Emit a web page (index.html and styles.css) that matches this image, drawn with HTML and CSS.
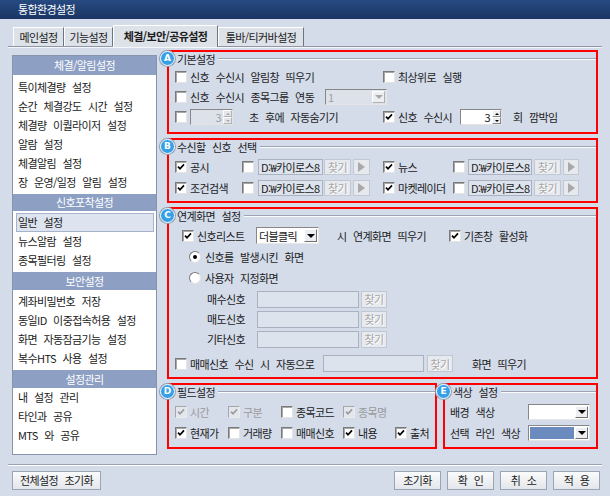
FILE: index.html
```html
<!DOCTYPE html>
<html lang="ko">
<head>
    <meta charset="UTF-8">
    <title>통합환경설정</title>
    <link rel="stylesheet" href="styles.css">
</head>
<body>
<div class="window">
    <div class="titlebar">통합환경설정</div>

    <!-- 탭 -->
    <ul class="tabs">
        <li>메인설정</li>
        <li>기능설정</li>
        <li class="on">체결/보안/공유설정</li>
        <li>툴바/티커바설정</li>
    </ul>

    <div class="panel">
        <!-- 왼쪽 메뉴 -->
        <div class="side">
            <div class="side-head first">체결/알림설정</div>
            <ul class="first">
                <li>특이체결량 설정</li>
                <li>순간 체결강도 시간 설정</li>
                <li>체결량 이퀄라이저 설정</li>
                <li>알람 설정</li>
                <li>체결알림 설정</li>
                <li>장 운영/일정 알림 설정</li>
            </ul>
            <div class="side-head second">신호포착설정</div>
            <ul>
                <li class="on">일반 설정</li>
                <li>뉴스알람 설정</li>
                <li>종목필터링 설정</li>
            </ul>
            <div class="side-head">보안설정</div>
            <ul>
                <li>계좌비밀번호 저장</li>
                <li>동일ID 이중접속허용 설정</li>
                <li>화면 자동잠금기능 설정</li>
                <li>복수HTS 사용 설정</li>
            </ul>
            <div class="side-head">설정관리</div>
            <ul class="last">
                <li>내 설정 관리</li>
                <li>타인과 공유</li>
                <li>MTS 와 공유</li>
            </ul>
        </div>

        <div class="main">
            <!-- A 기본설정 -->
            <div class="grp grp-a">
                <span class="mark">A</span>
                <div class="grp-title">기본설정</div>
                <div class="rows">
                    <div class="row">
                        <span class="cell w208"><i class="cb"></i>신호 수신시 알림창 띄우기</span>
                        <span class="cell"><i class="cb"></i>최상위로 실행</span>
                    </div>
                    <div class="row">
                        <span class="cell w150"><i class="cb"></i>신호 수신시 종목그룹 연동</span>
                        <span class="combo off w62"><span class="val">1</span><span class="drop"></span></span>
                    </div>
                    <div class="row">
                        <span class="cell w208">
                            <i class="cb"></i>
                            <span class="spin off w43"><span class="val">3</span><span class="arrows"><i></i><i></i></span></span>
                            <span class="after-spin">초 후에 자동숨기기</span>
                        </span>
                        <span class="cell">
                            <i class="cb"><svg viewBox="0 0 8 8"><polyline points="1,3.6 3,5.8 7,1.4"/></svg></i>
                            <span class="w62">신호 수신시</span>
                            <span class="spin w42"><span class="val">3</span><span class="arrows"><i></i><i></i></span></span>
                            <span class="after-spin2">회 깜박임</span>
                        </span>
                    </div>
                </div>
            </div>

            <!-- B 수신할 신호 선택 -->
            <div class="grp grp-b">
                <span class="mark">B</span>
                <div class="grp-title">수신할 신호 선택</div>
                <div class="rows">
                    <div class="row">
                        <span class="cell w67"><i class="cb"><svg viewBox="0 0 8 8"><polyline points="1,3.6 3,5.8 7,1.4"/></svg></i>공시</span>
                        <span class="cell w141"><i class="cb gap4"></i><span class="tb w65">D:₩카이로스8</span><span class="sbtn w27 ml1">찾기</span><span class="sbtn play w17 ml2"></span></span>
                        <span class="cell w70"><i class="cb"><svg viewBox="0 0 8 8"><polyline points="1,3.6 3,5.8 7,1.4"/></svg></i>뉴스</span>
                        <span class="cell"><i class="cb"></i><span class="tb w64">D:₩카이로스8</span><span class="sbtn w27 ml2">찾기</span><span class="sbtn play w16 ml2"></span></span>
                    </div>
                    <div class="row">
                        <span class="cell w67"><i class="cb"><svg viewBox="0 0 8 8"><polyline points="1,3.6 3,5.8 7,1.4"/></svg></i>조건검색</span>
                        <span class="cell w141"><i class="cb gap4"></i><span class="tb w65">D:₩카이로스8</span><span class="sbtn w27 ml1">찾기</span><span class="sbtn play w17 ml2"></span></span>
                        <span class="cell w70"><i class="cb"><svg viewBox="0 0 8 8"><polyline points="1,3.6 3,5.8 7,1.4"/></svg></i>마켓레이더</span>
                        <span class="cell"><i class="cb"></i><span class="tb w64">D:₩카이로스8</span><span class="sbtn w27 ml2">찾기</span><span class="sbtn play w16 ml2"></span></span>
                    </div>
                </div>
            </div>

            <!-- C 연계화면 설정 -->
            <div class="grp grp-c">
                <span class="mark">C</span>
                <div class="grp-title">연계화면 설정</div>
                <div class="rows">
                    <div class="row h21">
                        <span class="cell w74 ml7"><i class="cb"><svg viewBox="0 0 8 8"><polyline points="1,3.6 3,5.8 7,1.4"/></svg></i>신호리스트</span>
                        <span class="combo tall w63"><span class="val">더블클릭</span><span class="drop"></span></span>
                        <span class="cell w112 ml18">시 연계화면 띄우기</span>
                        <span class="cell"><i class="cb"><svg viewBox="0 0 8 8"><polyline points="1,3.6 3,5.8 7,1.4"/></svg></i>기존창 활성화</span>
                    </div>
                    <div class="row h21">
                        <span class="cell ml14"><i class="radio on"></i>신호를 발생시킨 화면</span>
                    </div>
                    <div class="row h22">
                        <span class="cell ml14"><i class="radio"></i>사용자 지정화면</span>
                    </div>
                    <div class="row h20">
                        <span class="cell w50 ml32">매수신호</span>
                        <span class="tb tall w102"></span>
                        <span class="sbtn tall w26 ml2">찾기</span>
                    </div>
                    <div class="row h20">
                        <span class="cell w50 ml32">매도신호</span>
                        <span class="tb tall w102"></span>
                        <span class="sbtn tall w26 ml2">찾기</span>
                    </div>
                    <div class="row h20">
                        <span class="cell w50 ml32">기타신호</span>
                        <span class="tb tall w102"></span>
                        <span class="sbtn tall w26 ml2">찾기</span>
                    </div>
                    <div class="row h21 last">
                        <span class="cell w148"><i class="cb"></i>매매신호 수신 시 자동으로</span>
                        <span class="tb tall w101"></span>
                        <span class="sbtn tall w26 ml3">찾기</span>
                        <span class="cell ml19">화면 띄우기</span>
                    </div>
                </div>
            </div>

            <div class="grp-line">
                <!-- D 필드설정 -->
                <div class="grp grp-d">
                    <span class="mark">D</span>
                    <div class="grp-title">필드설정</div>
                    <div class="rows">
                        <div class="row">
                            <span class="cell w53 dim"><i class="cb off"><svg viewBox="0 0 8 8"><polyline points="1,3.6 3,5.8 7,1.4"/></svg></i>시간</span>
                            <span class="cell w53 dim"><i class="cb off"><svg viewBox="0 0 8 8"><polyline points="1,3.6 3,5.8 7,1.4"/></svg></i>구분</span>
                            <span class="cell w62"><i class="cb"></i>종목코드</span>
                            <span class="cell dim"><i class="cb off"><svg viewBox="0 0 8 8"><polyline points="1,3.6 3,5.8 7,1.4"/></svg></i>종목명</span>
                        </div>
                        <div class="row">
                            <span class="cell w53"><i class="cb"><svg viewBox="0 0 8 8"><polyline points="1,3.6 3,5.8 7,1.4"/></svg></i>현재가</span>
                            <span class="cell w53"><i class="cb"></i>거래량</span>
                            <span class="cell w62"><i class="cb"></i>매매신호</span>
                            <span class="cell w52"><i class="cb"><svg viewBox="0 0 8 8"><polyline points="1,3.6 3,5.8 7,1.4"/></svg></i>내용</span>
                            <span class="cell"><i class="cb"><svg viewBox="0 0 8 8"><polyline points="1,3.6 3,5.8 7,1.4"/></svg></i>출처</span>
                        </div>
                    </div>
                </div>

                <!-- E 색상 설정 -->
                <div class="grp grp-e">
                    <span class="mark">E</span>
                    <div class="grp-title">색상 설정</div>
                    <div class="rows">
                        <div class="row">
                            <span class="cell w78">배경 색상</span>
                            <span class="combo w62"><span class="val"></span><span class="drop"></span></span>
                        </div>
                        <div class="row">
                            <span class="cell w78">선택 라인 색상</span>
                            <span class="combo w62"><span class="val swatch"></span><span class="drop"></span></span>
                        </div>
                    </div>
                </div>
            </div>
        </div>
    </div>

    <!-- 하단 버튼 -->
    <div class="foot">
        <span class="btn wide">전체설정 초기화</span>
        <span class="btn first-r">초기화</span>
        <span class="btn">확 인</span>
        <span class="btn">취 소</span>
        <span class="btn">적 용</span>
    </div>
</div>
</body>
</html>
```

FILE: styles.css
```css
*{
    box-sizing: border-box;
}
body{
    margin: 0;
    font-family: "Noto Sans CJK KR", sans-serif;
    font-size: 11px;
    letter-spacing: -0.6px;
    word-spacing: 4px;
    color: #1b1b1b;
}
ul,li{
    margin: 0;
    padding: 0;
    list-style: none;
}
i{
    font-style: normal;
}
.window{
    width: 610px;
    height: 496px;
    background: #d4dcea;
    overflow: hidden;
}
.titlebar{
    height: 19px;
    line-height: 19px;
    padding-left: 18px;
    color: #fff;
    background: linear-gradient(#274a80, #1a3564);
}

/* 탭 */
.tabs{
    display: flex;
    height: 27px;
    padding: 6px 0 0 13px;
}
.tabs li{
    height: 19px;
    margin-top: 2px;
    line-height: 18px;
    text-align: center;
    background: #dde1e8;
    border-top: 1px solid #fff;
    border-left: 1px solid #fff;
    border-right: 1px solid #6d7584;
}
.tabs li:nth-child(1){ width: 51px; }
.tabs li:nth-child(2){ width: 49px; }
.tabs li:nth-child(3){ width: 105px; }
.tabs li:nth-child(4){ width: 86px; }
.tabs li.on{
    position: relative;
    z-index: 1;
    height: 22px;
    margin-top: 0;
    line-height: 20px;
    font-weight: bold;
}

.panel{
    display: flex;
    height: 411px;
    margin: 0 8px;
    padding: 3px 4px 0;
    border-top: 1px solid #8f98aa;
    box-shadow: inset 0 1px 0 #f4f6fa;
}

/* 왼쪽 메뉴 */
.side{
    width: 145px;
    height: 400px;
    margin-top: 5px;
    background: #fff;
    border: 1px solid #8794ae;
}
.side-head{
    height: 18px;
    line-height: 18px;
    text-align: center;
    color: #fff;
    background: #8da0c4;
}
.side-head.first{ height: 19px; }
.side-head.second{ height: 17px; line-height: 17px; }
.side ul{
    padding: 2px 0;
}
.side ul.first{ padding-top: 3px; }
.side ul.last{ padding-top: 0; }
.side li{
    height: 19px;
    line-height: 19px;
    padding-left: 5px;
    white-space: nowrap;
}
.side li.on{
    margin: 0 2px 0 3px;
    padding-left: 1px;
    line-height: 17px;
    background: #dde4ef;
    border: 1px solid #a5b3cc;
}

/* 오른쪽 설정 */
.main{
    display: flex;
    flex-direction: column;
    gap: 4px;
    width: 431px;
    margin-left: 10px;
}
.grp{
    position: relative;
    border: 2px solid #f00;
}
.grp-a{ height: 84px; }
.grp-b{ height: 65px; }
.grp-c{ height: 172px; }
.grp-line{
    display: flex;
    gap: 6px;
}
.grp-d{ width: 270px; height: 66px; }
.grp-e{ width: 155px; height: 66px; }

.grp-title{
    display: flex;
    align-items: center;
    height: 13px;
    padding-left: 8px;
    white-space: nowrap;
}
.grp-title::after{
    content: "";
    flex: 1;
    margin-left: 3px;
    border-top: 1px solid #9ba4b4;
    border-bottom: 1px solid #fbfcfd;
}
.mark{
    position: absolute;
    left: -9px;
    top: -1px;
    width: 15px;
    height: 15px;
    border-radius: 50%;
    background: #35a0e8;
    border: 1.5px solid #fff;
    box-shadow: 0 0 0 1px #8f9cb0;
    color: #fff;
    font-family: "DejaVu Sans", sans-serif;
    font-size: 9px;
    font-weight: bold;
    letter-spacing: 0;
    line-height: 12px;
    text-align: center;
}

.rows{
    padding: 3px 0 0 6px;
}
.grp-a .rows{ padding-top: 2px; }
.grp-e .rows{ padding-left: 5px; }
.row{
    display: flex;
    align-items: center;
    height: 21px;
    white-space: nowrap;
}
.grp-a .row{ height: 20px; }
.row.h20{ height: 20px; }
.row.h22{ height: 22px; }
.row.last{ margin-top: 4px; }
.cell{
    display: flex;
    align-items: center;
    flex: none;
}
.dim{ color: #9a9a9a; }

.w26{ width: 26px; } .w27{ width: 27px; }
.w16{ width: 16px; } .w17{ width: 17px; }
.w42{ width: 42px; } .w43{ width: 43px; }
.w50{ width: 50px; } .w52{ width: 52px; } .w53{ width: 53px; }
.w62{ width: 62px; } .w63{ width: 63px; } .w64{ width: 64px; } .w65{ width: 65px; }
.w67{ width: 67px; } .w70{ width: 70px; } .w74{ width: 74px; } .w78{ width: 78px; }
.w101{ width: 101px; } .w102{ width: 102px; } .w112{ width: 112px; }
.w141{ width: 141px; } .w148{ width: 148px; } .w150{ width: 150px; } .w208{ width: 208px; }
.ml1{ margin-left: 1px; } .ml2{ margin-left: 2px; } .ml3{ margin-left: 3px; }
.ml7{ margin-left: 7px; } .ml14{ margin-left: 14px; } .ml18{ margin-left: 18px; }
.ml19{ margin-left: 19px; } .ml32{ margin-left: 32px; }
.after-spin{ margin-left: 16px; }
.after-spin2{ margin-left: 11px; }

/* 체크박스 / 라디오 */
.cb{
    display: flex;
    align-items: center;
    justify-content: center;
    flex: none;
    width: 12px;
    height: 12px;
    margin-right: 3px;
    background: #fff;
    border: 1px solid;
    border-color: #7a7a7a #e4e4e4 #e4e4e4 #7a7a7a;
    box-shadow: inset 1px 1px 0 #a8a8a8;
}
.cb.gap4{ margin-right: 4px; }
.cb svg{
    width: 8px;
    height: 8px;
}
.cb polyline{
    fill: none;
    stroke: #000;
    stroke-width: 1.7;
}
.cb.off{
    background: #e3e7ed;
    border-color: #a6a6a6 #ececec #ececec #a6a6a6;
    box-shadow: none;
}
.cb.off polyline{ stroke: #9c9c9c; }
.radio{
    display: flex;
    align-items: center;
    justify-content: center;
    flex: none;
    width: 12px;
    height: 12px;
    margin-right: 4px;
    border-radius: 50%;
    background: #fff;
    border: 1px solid;
    border-color: #7a7a7a #e2e2e2 #e2e2e2 #7a7a7a;
}
.radio.on::after{
    content: "";
    width: 4px;
    height: 4px;
    border-radius: 50%;
    background: #000;
}

/* 입력상자 */
.tb{
    display: flex;
    align-items: center;
    flex: none;
    height: 16px;
    padding-left: 2px;
    overflow: hidden;
    white-space: nowrap;
    word-spacing: 0;
    background: #dde3ed;
    border: 1px solid #aab2c1;
}
.tb.tall{ height: 17px; }
.sbtn{
    display: flex;
    align-items: center;
    justify-content: center;
    flex: none;
    height: 16px;
    color: #a6a6a6;
    text-shadow: 1px 1px 0 #fff;
    background: #e6e9ee;
    border: 1px solid #c2c8d2;
}
.sbtn.tall{ height: 17px; }
.sbtn.play::after{
    content: "";
    border-left: 7px solid #a9a9a9;
    border-top: 5px solid transparent;
    border-bottom: 5px solid transparent;
}

.spin{
    display: flex;
    flex: none;
    height: 16px;
    background: #fff;
    border: 1px solid;
    border-color: #878787 #e3e3e3 #e3e3e3 #878787;
}
.spin .val{
    display: flex;
    align-items: center;
    justify-content: flex-end;
    flex: 1;
    padding-right: 2px;
}
.spin .arrows{
    display: flex;
    flex-direction: column;
    width: 9px;
}
.spin .arrows i{
    display: flex;
    align-items: center;
    justify-content: center;
    flex: 1;
    background: #eceef2;
    border: 1px solid;
    border-color: #fff #8a8a8a #8a8a8a #fff;
}
.spin .arrows i:first-child::after{
    content: "";
    border-bottom: 2px solid #000;
    border-left: 2px solid transparent;
    border-right: 2px solid transparent;
}
.spin .arrows i:last-child::after{
    content: "";
    border-top: 2px solid #000;
    border-left: 2px solid transparent;
    border-right: 2px solid transparent;
}
.spin.off{ background: #dde2ea; }
.spin.off .val{ color: #a0a0a0; }
.spin.off .arrows i{ background: #e3e6eb; border-color: #fff #b3b3b3 #b3b3b3 #fff; }
.spin.off .arrows i:first-child::after{ border-bottom-color: #a8a8a8; }
.spin.off .arrows i:last-child::after{ border-top-color: #a8a8a8; }

.combo{
    display: flex;
    flex: none;
    height: 16px;
    padding: 1px;
    background: #fff;
    border: 1px solid;
    border-color: #878787 #e6e6e6 #e6e6e6 #878787;
}
.combo.tall{ height: 17px; }
.combo .val{
    display: flex;
    align-items: center;
    flex: 1;
    padding-left: 1px;
    white-space: nowrap;
}
.combo .val.swatch{
    margin-right: 1px;
    background: #6b8bbf;
}
.combo .drop{
    display: flex;
    align-items: center;
    justify-content: center;
    width: 13px;
    background: #eceef2;
    border: 1px solid;
    border-color: #fff #6f6f6f #6f6f6f #fff;
}
.combo .drop::after{
    content: "";
    border-top: 4px solid #000;
    border-left: 4px solid transparent;
    border-right: 4px solid transparent;
}
.combo.off{ background: #dce1ea; }
.combo.off .val{ color: #a0a0a0; }
.combo.off .drop{ border-color: #fff #b0b0b0 #b0b0b0 #fff; }
.combo.off .drop::after{ border-top-color: #a8a8a8; }

/* 하단 버튼 */
.foot{
    display: flex;
    margin: 7px 8px 0;
    padding: 6px 2px 0 4px;
    border-top: 1px solid #9aa3b3;
    box-shadow: inset 0 1px 0 #fff;
}
.btn{
    width: 47px;
    height: 19px;
    margin-left: 6px;
    line-height: 17px;
    text-align: center;
    background: linear-gradient(#fafbfc, #e3e6eb);
    border: 1px solid #9ba4b3;
}
.btn.wide{
    width: 89px;
    margin-left: 0;
}
.btn.first-r{
    margin-left: auto;
}
```
